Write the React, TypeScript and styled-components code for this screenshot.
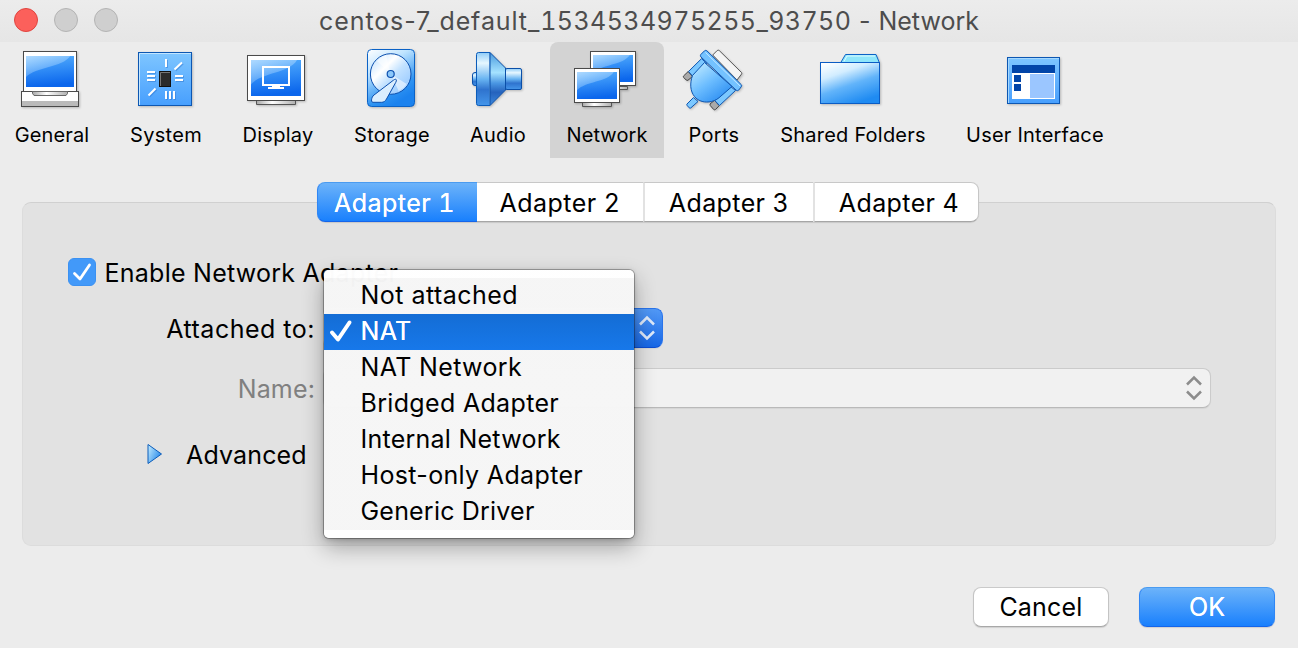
import React from 'react';
import styled, { createGlobalStyle } from 'styled-components';

const GlobalStyle = createGlobalStyle`
  html, body { margin: 0; padding: 0; background: #ececec; }
  body { overflow: hidden; }
  *, *::before, *::after { box-sizing: border-box; }
`;

const Window = styled.main`
  width: 1298px;
  height: 648px;
  display: flex;
  flex-direction: column;
  background: #ececec;
  color: #000;
  font-family: Inter, 'Liberation Sans', sans-serif;
  font-size: 25px;
  line-height: 36px;
`;

const Text = styled.span<{ $ls?: number; $tabular?: boolean }>`
  white-space: pre;
  letter-spacing: ${(p) => p.$ls ?? 0}px;
  font-variant-numeric: ${(p) => (p.$tabular ? 'tabular-nums' : 'normal')};
`;

const TitleBar = styled.header`
  position: relative;
  height: 42px;
  flex: none;
  display: flex;
  align-items: center;
  justify-content: center;
  background: linear-gradient(#ececec, #e6e6e6);
  color: #4d4d4d;
`;

const Lights = styled.div`
  position: absolute;
  left: 14px;
  top: 8px;
  display: flex;
  gap: 16px;
`;

const Light = styled.i<{ $fill: string; $edge: string }>`
  width: 24px;
  height: 24px;
  border-radius: 50%;
  background: ${(p) => p.$fill};
  border: 1px solid ${(p) => p.$edge};
`;

const Toolbar = styled.nav`
  height: 116px;
  flex: none;
  display: flex;
`;

const Tool = styled.button<{ $width: number; $active?: boolean; $gap?: number }>`
  width: ${(p) => p.$width}px;
  margin: 0 0 0 ${(p) => p.$gap ?? 0}px;
  padding: 4px 0 0;
  border: 0;
  border-radius: 8px 8px 0 0;
  background: ${(p) => (p.$active ? '#d3d3d3' : 'transparent')};
  color: inherit;
  font: inherit;
  font-size: 20px;
  line-height: 28px;
  display: flex;
  flex-direction: column;
  align-items: center;
  gap: 9px;

  svg {
    display: block;
    flex: none;
    overflow: visible;
    filter: drop-shadow(1px 1.5px 1px rgba(0, 0, 0, 0.22));
  }
`;

const Content = styled.section`
  flex: 1;
  display: flex;
  flex-direction: column;
  padding: 24px 22px 0;
`;

const Tabs = styled.div`
  position: relative;
  z-index: 1;
  align-self: flex-start;
  margin: 0 0 -20px 295px;
  height: 40px;
  display: flex;
  border-radius: 9px;
  box-shadow: 0 1px 1px rgba(0, 0, 0, 0.12);
`;

const Tab = styled.button<{ $width: number; $active?: boolean; $pad: string }>`
  width: ${(p) => p.$width}px;
  margin: 0;
  padding: ${(p) => p.$pad};
  font: inherit;
  display: flex;
  align-items: center;
  justify-content: center;
  border: 1px solid;
  border-color: ${(p) => (p.$active ? '#4a9bf0 #2f86f5 #1565ea' : '#c8c8c8 #c6c6c6 #a6a6a6')};
  border-width: ${(p) => (p.$active ? '1px 0 1px 1px' : '1px 0')};
  background: ${(p) => (p.$active ? 'linear-gradient(#6cb3fa, #1980fd)' : '#fff')};
  color: ${(p) => (p.$active ? '#fff' : '#000')};
  text-shadow: ${(p) => (p.$active ? '0 0 0.6px #fff' : 'none')};

  &:first-child {
    border-radius: 8px 0 0 8px;
  }
  &:last-child {
    border-right-width: 1px;
    border-radius: 0 8px 8px 0;
  }
  &:nth-child(n + 3) {
    border-left: 2px solid #e2e2e2;
  }
`;

const Panel = styled.div`
  height: 344px;
  display: flex;
  flex-direction: column;
  padding-top: 51px;
  border: 1px solid #dcdcdc;
  border-top-color: #d0d0d0;
  border-radius: 9px;
  background: #e2e2e2;
`;

const CheckRow = styled.label`
  height: 36px;
  display: flex;
  align-items: center;
  padding-left: 45px;
  gap: 8.5px;

  & > ${Text} {
    padding-top: 2px;
  }
`;

const CheckBox = styled.span`
  width: 28px;
  height: 28px;
  border-radius: 6px;
  background: #4299f9;
  border: 1px solid #3b91f2;

  svg {
    display: block;
  }
`;

const FormRow = styled.div<{ $top: number; $muted?: boolean }>`
  height: 40px;
  margin-top: ${(p) => p.$top}px;
  display: flex;
  align-items: center;
  gap: 8px;
  color: ${(p) => (p.$muted ? '#808080' : '#000')};
`;

const RowLabel = styled.span`
  width: 292px;
  display: flex;
  justify-content: flex-end;
  padding-top: 1px;
`;

const Combo = styled.div<{ $width: number; $disabled?: boolean }>`
  position: relative;
  width: ${(p) => p.$width}px;
  height: 40px;
  display: flex;
  justify-content: flex-end;
  border-radius: 8px;
  background: ${(p) => (p.$disabled ? '#f1f1f1' : '#fff')};
  border: ${(p) => (p.$disabled ? '1px solid #cbcbcb' : '0')};
  border-bottom-color: #b9b9b9;
  box-shadow: 0 1px 1px rgba(0, 0, 0, 0.06);
`;

const Stepper = styled.span<{ $disabled?: boolean }>`
  width: 32px;
  display: flex;
  align-items: center;
  justify-content: center;
  border-radius: 0 8px 8px 0;
  color: ${(p) => (p.$disabled ? '#8c8c8c' : '#dfeafa')};
  background: ${(p) => (p.$disabled ? 'none' : 'linear-gradient(#5299f6, #1767e6)')};
  border: ${(p) => (p.$disabled ? '0' : '1px solid #2a74ea')};
  border-bottom-color: #0d4ed2;
`;

const Menu = styled.ul`
  position: absolute;
  z-index: 2;
  left: 1px;
  top: -38px;
  width: 310px;
  margin: 0;
  padding: 8px 0;
  list-style: none;
  border-radius: 5px;
  background: linear-gradient(
    rgba(255, 255, 255, 0.985) 8px,
    rgba(246, 246, 246, 0.98) 8px,
    rgba(246, 246, 246, 0.98) 260px,
    #fff 260px
  );
  box-shadow: 0 0 0 1px rgba(0, 0, 0, 0.28), 0 9px 22px rgba(0, 0, 0, 0.32), 0 1px 5px rgba(0, 0, 0, 0.22);
`;

const MenuItem = styled.li<{ $selected?: boolean }>`
  height: 36px;
  display: flex;
  align-items: center;
  background: ${(p) => (p.$selected ? 'linear-gradient(#146dd5, #1778ea)' : 'none')};
  color: ${(p) => (p.$selected ? '#fff' : '#000')};
  text-shadow: ${(p) => (p.$selected ? '0 0 0.6px #fff' : 'none')};

  & > ${Text} {
    padding-bottom: 2px;
  }
`;

const MenuMark = styled.span`
  width: 36.5px;
  height: 36px;
`;

const Disclosure = styled.div`
  height: 36px;
  margin-top: 28px;
  padding-left: 123px;
  display: flex;
  align-items: center;
  gap: 22px;

  & > ${Text} {
    padding-top: 1px;
  }
`;

const Footer = styled.footer`
  display: flex;
  justify-content: flex-end;
  gap: 30px;
  padding: 41px 1px 0 0;
`;

const Button = styled.button<{ $primary?: boolean }>`
  width: 136px;
  height: 40px;
  padding: 0;
  font: inherit;
  display: flex;
  align-items: center;
  justify-content: center;
  border-radius: 8px;
  border: 1px solid;
  border-color: ${(p) => (p.$primary ? '#4a9bf0 #2f86f5 #1565ea' : '#cacaca #c4c4c4 #a8a8a8')};
  background: ${(p) => (p.$primary ? 'linear-gradient(#6cb3fa, #1980fd)' : '#fff')};
  color: ${(p) => (p.$primary ? '#fff' : '#000')};
  text-shadow: ${(p) => (p.$primary ? '0 0 0.6px #fff' : 'none')};
  box-shadow: 0 1px 1px rgba(0, 0, 0, 0.12);
`;

const Gradients = () => (
  <svg width="0" height="0" style={{ position: 'absolute' }} aria-hidden>
    <defs>
      <linearGradient id="screen" x1="0" y1="0" x2="0.15" y2="1">
        <stop offset="0" stopColor="#55aefc" />
        <stop offset="0.5" stopColor="#2f8bf6" />
        <stop offset="1" stopColor="#0b66ec" />
      </linearGradient>
      <linearGradient id="gloss" x1="0" y1="0" x2="0.6" y2="1">
        <stop offset="0" stopColor="#b4dcff" stopOpacity="0.95" />
        <stop offset="1" stopColor="#8cc6ff" stopOpacity="0.2" />
      </linearGradient>
      <linearGradient id="tile" x1="0" y1="0" x2="0" y2="1">
        <stop offset="0" stopColor="#7fc6ff" />
        <stop offset="1" stopColor="#479ffe" />
      </linearGradient>
      <linearGradient id="neck" x1="0" y1="0" x2="1" y2="0">
        <stop offset="0" stopColor="#a8a8a8" />
        <stop offset="0.4" stopColor="#fff" />
        <stop offset="1" stopColor="#b0b0b0" />
      </linearGradient>
      <linearGradient id="drive" x1="0" y1="0" x2="0.5" y2="1">
        <stop offset="0" stopColor="#ffffff" />
        <stop offset="0.35" stopColor="#bfe4ff" />
        <stop offset="0.8" stopColor="#2f94f2" />
        <stop offset="1" stopColor="#1b82ee" />
      </linearGradient>
      <linearGradient id="disc" x1="0" y1="0" x2="1" y2="1">
        <stop offset="0" stopColor="#b5dcff" />
        <stop offset="0.35" stopColor="#ffffff" />
        <stop offset="0.55" stopColor="#c3e2ff" />
        <stop offset="0.8" stopColor="#a3d0ff" />
        <stop offset="1" stopColor="#f0f9ff" />
      </linearGradient>
      <linearGradient id="horn" x1="0" y1="0" x2="0" y2="1">
        <stop offset="0" stopColor="#8fccf8" />
        <stop offset="0.2" stopColor="#e6f7ff" />
        <stop offset="0.5" stopColor="#68b4f2" />
        <stop offset="0.7" stopColor="#2f73ce" />
        <stop offset="1" stopColor="#4496ea" />
      </linearGradient>
      <linearGradient id="cone" x1="0" y1="0" x2="0" y2="1">
        <stop offset="0" stopColor="#4a9ade" />
        <stop offset="0.38" stopColor="#a5e2ff" />
        <stop offset="0.58" stopColor="#4a96e2" />
        <stop offset="0.75" stopColor="#2562bd" />
        <stop offset="1" stopColor="#3b88dc" />
      </linearGradient>
      <linearGradient id="folder" x1="0.1" y1="0" x2="0.6" y2="1">
        <stop offset="0" stopColor="#ffffff" />
        <stop offset="0.3" stopColor="#d2edff" />
        <stop offset="0.6" stopColor="#62b4fa" />
        <stop offset="1" stopColor="#1f8bf2" />
      </linearGradient>
      <linearGradient id="plug" x1="0.15" y1="0.1" x2="0.75" y2="0.9">
        <stop offset="0" stopColor="#b4e4ff" />
        <stop offset="0.5" stopColor="#6cbdff" />
        <stop offset="1" stopColor="#3393f3" />
      </linearGradient>
      <linearGradient id="arrow" x1="0" y1="0" x2="1" y2="0.6">
        <stop offset="0" stopColor="#c8efff" />
        <stop offset="1" stopColor="#2789ea" />
      </linearGradient>
    </defs>
  </svg>
);

const Screen = ({ x, y, w, h }: { x: number; y: number; w: number; h: number }) => (
  <>
    <rect x={x} y={y} width={w} height={h} fill="url(#screen)" />
    <path
      d={`M${x} ${y}h${w * 0.92}c-${w * 0.16} ${h * 0.38} -${w * 0.72} ${h * 0.34} -${w * 0.92} ${h * 0.68}z`}
      fill="url(#gloss)"
    />
  </>
);

const GeneralIcon = () => (
  <>
    <rect x="21.5" y="91.5" width="57" height="15" fill="#fff" stroke="#4a4a4a" />
    <rect x="22" y="101" width="56" height="5" fill="#bababa" />
    <rect x="23.5" y="51.5" width="53" height="40" fill="#fff" stroke="#4a4a4a" />
    <Screen x={26} y={56} w={48} h={31} />
    <path d="M32.500 91.500h35v2l-1.500 2h-32l-1.500-2z" fill="url(#neck)" stroke="#666" />
  </>
);

const boardTraces =
  'M166 59v8M174.500 69.500l7.500-7M147 72h8M147 76h8M147 80h8M175 76h8M175 80h8M148.500 95.500l7-7M166 91v8M170 91v8M174 91v8';

const SystemIcon = () => (
  <>
    <rect x="138.500" y="52.500" width="53" height="53" fill="url(#tile)" stroke="#0d57b2" />
    <path d="M139.500 105V53.500H191" fill="none" stroke="#c2e5ff" />
    <path d={boardTraces} transform="translate(1 1)" stroke="#2d75cf" strokeOpacity="0.5" strokeWidth="2" />
    <path d={boardTraces} stroke="#fff" strokeWidth="2" />
    <rect x="159.500" y="71.500" width="11" height="15" fill="#2b2b2b" stroke="#111" />
    <path d="M160.500 86V72.500H170" fill="none" stroke="#777" />
  </>
);

const DisplayIcon = () => (
  <>
    <path d="M256.500 100.500h39v4h-39z" fill="url(#neck)" stroke="#555" />
    <rect x="247.500" y="55.500" width="57" height="45" fill="#fff" stroke="#4a4a4a" />
    <Screen x={251} y={60} w={50} h={36} />
    <rect x="263" y="67" width="26" height="18" fill="none" stroke="#fff" strokeWidth="2" />
    <path d="M272 86.500h8M268 88h16" stroke="#fff" strokeWidth="1.800" />
  </>
);

const StorageIcon = () => (
  <>
    <rect x="367.500" y="49.500" width="47" height="57" rx="4" fill="url(#drive)" stroke="#0b62c6" />
    <circle cx="390.700" cy="74" r="20.300" fill="url(#disc)" stroke="#0c4fae" />
    <path d="M390.700 74L377 61a19 19 0 0 1 9-6zM390.700 74l16 10a19 19 0 0 1-8 7z" fill="#fff" fillOpacity="0.55" />
    <circle cx="390.700" cy="74" r="3.500" fill="#8cc8fb" stroke="#0c4fae" strokeWidth="1.200" />
    <path
      d="M393.300 80.300c1.500-1.200 2.700-1.300 3-.6.300.6 0 1.600-.5 2.600L386.500 99c-1.300 2.300-2.700 3.300-5 3.300H373c-1.700 0-1.700-2-1.200-3.800.5-2 1.700-3.300 3.300-4.300z"
      fill="#dbeefe"
      stroke="#0c4fae"
    />
  </>
);

const AudioIcon = () => (
  <>
    <rect x="472.500" y="72.500" width="6" height="13" rx="2.500" fill="url(#horn)" stroke="#0b4fa8" />
    <path d="M490 52.500L505.500 68v22L490 105.500z" fill="url(#cone)" stroke="#0b4fa8" />
    <rect x="476.500" y="52.500" width="13" height="53" rx="2" fill="url(#horn)" />
    <path d="M490 52.500h-11.500q-2 0-2 2v49q0 2 2 2H490" fill="none" stroke="#0b5cba" />
    <path d="M489.500 53v52" stroke="#2a72c4" strokeOpacity="0.7" />
    <rect x="505.500" y="68.500" width="16" height="21" rx="1.500" fill="url(#horn)" stroke="#0b4fa8" />
  </>
);

const NetworkIcon = () => (
  <>
    <path d="M599 86.500h28.500v3H599z" fill="url(#neck)" stroke="#555" />
    <rect x="590.500" y="51.500" width="45" height="34" fill="#fff" stroke="#4a4a4a" />
    <Screen x={593} y={55} w={40} h={27} />
    <path d="M582.500 102.500h29v4h-29z" fill="url(#neck)" stroke="#555" />
    <rect x="574.500" y="68.500" width="45" height="34" fill="#fff" stroke="#4a4a4a" />
    <Screen x={577} y={72} w={40} h={27} />
  </>
);

const PortsIcon = () => (
  <g strokeLinejoin="round">
    <path d="M712.700 55l4.500-4.500q1-.8 2 0L741.500 72.500q.6.800 0 1.600L737 80z" fill="#f4f4f4" stroke="#555" />
    <path d="M683.500 76l4.700-4.500 4.300 5-4.500 3.700q-1 .6-1.800-.2l-2.500-2.500q-.6-.8-.2-1.500z" fill="#aaa" stroke="#444" />
    <path d="M701.500 58.700L688.500 71.500l4.500 5L707 63.500z" fill="#7cc8ff" stroke="#0d55b0" />
    <path d="M710 104l4.500-3.700 4.700 5.400-3.700 3.800q-.9.700-1.800 0l-3.500-4z" fill="#aaa" stroke="#444" />
    <path d="M730 86l5.500 4.500-16 15-4.700-5z" fill="#7cc8ff" stroke="#0d55b0" />
    <path d="M693.500 97.500l4.500 4-7.300 6.500q-.9.500-1.500-.2l-2.200-2.500q-.5-.7 0-1.300z" fill="#7cc8ff" stroke="#0d55b0" />
    <path
      d="M704.500 62.500L692.500 75.500c-2.700 7.500-2.500 15.500 2 21 4 5 10.500 6.500 17 5 4-1 7-3 9.500-5.500L732 86.500z"
      fill="url(#plug)"
      stroke="#0d55b0"
    />
    <path
      d="M700.800 54.500l3.700-3.700q1.200-.9 2.400 0L741.300 84.700q.8 1 0 2l-2.700 3.500q-1.200 1-2.400 0L700.800 56.800q-.8-1.200 0-2.300z"
      fill="#74c2ff"
      stroke="#0d55b0"
    />
    <path d="M705.500 52.500L740 86" stroke="#c3e8ff" fill="none" />
  </g>
);

const FolderIcon = () => (
  <>
    <path d="M840.500 63l5-8.500H876l3.500 8.500z" fill="#8fe6fb" stroke="#0b62c6" />
    <path d="M844 61.500l3-5.500h28" fill="none" stroke="#dcfbff" />
    <rect x="820.500" y="62.500" width="59" height="41" fill="url(#folder)" stroke="#0b5cc4" />
  </>
);

const InterfaceIcon = () => (
  <>
    <rect x="1007.500" y="57.500" width="52" height="46" fill="url(#tile)" stroke="#0d57b2" />
    <path d="M1008.500 103V58.500H1059" fill="none" stroke="#a5d8ff" />
    <rect x="1012" y="65" width="43" height="8" fill="#0245a8" />
    <rect x="1012" y="73" width="43" height="26" fill="#fff" />
    <rect x="1014" y="75" width="7" height="7" fill="#0245a8" />
    <rect x="1014" y="84" width="7" height="7" fill="#0245a8" />
    <rect x="1030" y="74" width="24" height="24" fill="#9bc6ff" />
  </>
);

/* Each drawing uses toolbar coordinates; cx is the horizontal centre of its cell. */
const tools = [
  { label: 'General', Icon: GeneralIcon, cx: 52, width: 104, ls: 0.15 },
  { label: 'System', Icon: SystemIcon, cx: 166, width: 124, ls: 0.3 },
  { label: 'Display', Icon: DisplayIcon, cx: 278, width: 100, ls: 0.25 },
  { label: 'Storage', Icon: StorageIcon, cx: 392, width: 128, ls: 0.3 },
  { label: 'Audio', Icon: AudioIcon, cx: 498, width: 84, ls: 0.3 },
  { label: 'Network', Icon: NetworkIcon, cx: 607, width: 114, gap: 10, active: true, ls: 0.08 },
  { label: 'Ports', Icon: PortsIcon, cx: 714, width: 100, ls: 0.3 },
  { label: 'Shared Folders', Icon: FolderIcon, cx: 853, width: 178, ls: 0.22 },
  { label: 'User Interface', Icon: InterfaceIcon, cx: 1035, width: 186, ls: 0.22 },
];

const tabs = [
  { label: 'Adapter 1', width: 160, ls: 0.45, pad: '2px 6px 0 0' },
  { label: 'Adapter 2', width: 166, ls: 0.45, pad: '2px 0 0' },
  { label: 'Adapter 3', width: 170, ls: 0.4, pad: '2px 0 0' },
  { label: 'Adapter 4', width: 166, ls: 0.4, pad: '2px 0 0 5px' },
];

const options = [
  { label: 'Not attached', ls: 0.47 },
  { label: 'NAT', ls: 0.3 },
  { label: 'NAT Network', ls: 0.35 },
  { label: 'Bridged Adapter', ls: 0.33 },
  { label: 'Internal Network', ls: 0.25 },
  { label: 'Host-only Adapter', ls: 0.34 },
  { label: 'Generic Driver', ls: 0.2 },
];

const Chevrons = () => (
  <svg width="16" height="26" viewBox="0 0 16 26" fill="none" stroke="currentColor" strokeWidth="2.500">
    <path d="M1 9.500L8 2.500l7 7M1 16.500l7 7 7-7" />
  </svg>
);

export default function App() {
  return (
    <Window>
      <GlobalStyle />
      <Gradients />
      <TitleBar>
        <Lights>
          <Light $fill="#fc605b" $edge="#e0443f" />
          <Light $fill="#cfcfcf" $edge="#b4b4b4" />
          <Light $fill="#cfcfcf" $edge="#b4b4b4" />
        </Lights>
        <Text $ls={0.9}>centos-7_default_</Text>
        <Text $ls={0.42} $tabular>
          1534534975255_93750
        </Text>
        <Text $ls={0.5}>{' - '}</Text>
        <Text>Network</Text>
      </TitleBar>
      <Toolbar>
        {tools.map(({ label, Icon, cx, width, gap, active, ls }) => (
          <Tool key={label} $width={width} $gap={gap} $active={active}>
            <svg width="66" height="66" viewBox={`${cx - 33} 46 66 66`}>
              <Icon />
            </svg>
            <Text $ls={ls}>{label}</Text>
          </Tool>
        ))}
      </Toolbar>
      <Content>
        <Tabs>
          {tabs.map((t, i) => (
            <Tab key={t.label} $width={t.width} $pad={t.pad} $active={i === 0}>
              <Text $ls={t.ls} $tabular>
                {t.label}
              </Text>
            </Tab>
          ))}
        </Tabs>
        <Panel>
          <CheckRow>
            <CheckBox>
              <svg width="26" height="26" viewBox="0 0 26 26" fill="none" stroke="#fff" strokeWidth="2.800">
                <path d="M5.500 14.500l5.500 5.500L20.500 6" strokeLinecap="round" strokeLinejoin="round" />
              </svg>
            </CheckBox>
            <Text $ls={0.25}>Enable Network Adapter</Text>
          </CheckRow>
          <FormRow $top={18}>
            <RowLabel>
              <Text $ls={0.5}>Attached to:</Text>
            </RowLabel>
            <Combo $width={340}>
              <Stepper>
                <Chevrons />
              </Stepper>
              <Menu>
                {options.map((o, i) => (
                  <MenuItem key={o.label} $selected={i === 1}>
                    <MenuMark>
                      {i === 1 && (
                        <svg width="36" height="36" viewBox="0 0 36 36" fill="none" stroke="#fff" strokeWidth="4">
                          <path d="M8 18.500l6 7L25.500 8.500" strokeLinecap="round" strokeLinejoin="round" />
                        </svg>
                      )}
                    </MenuMark>
                    <Text $ls={o.ls}>{o.label}</Text>
                  </MenuItem>
                ))}
              </Menu>
            </Combo>
          </FormRow>
          <FormRow $top={20} $muted>
            <RowLabel>
              <Text $ls={0.15}>Name:</Text>
            </RowLabel>
            <Combo $width={888} $disabled>
              <Stepper $disabled>
                <Chevrons />
              </Stepper>
            </Combo>
          </FormRow>
          <Disclosure>
            <svg width="18" height="22" viewBox="0 0 18 22">
              <path d="M2 1.500L15.500 11 2 20.500z" fill="url(#arrow)" stroke="#0b5cba" strokeLinejoin="round" />
            </svg>
            <Text $ls={0.15}>Advanced</Text>
          </Disclosure>
        </Panel>
        <Footer>
          <Button>
            <Text $ls={0.2}>Cancel</Text>
          </Button>
          <Button $primary>
            <Text>OK</Text>
          </Button>
        </Footer>
      </Content>
    </Window>
  );
}
